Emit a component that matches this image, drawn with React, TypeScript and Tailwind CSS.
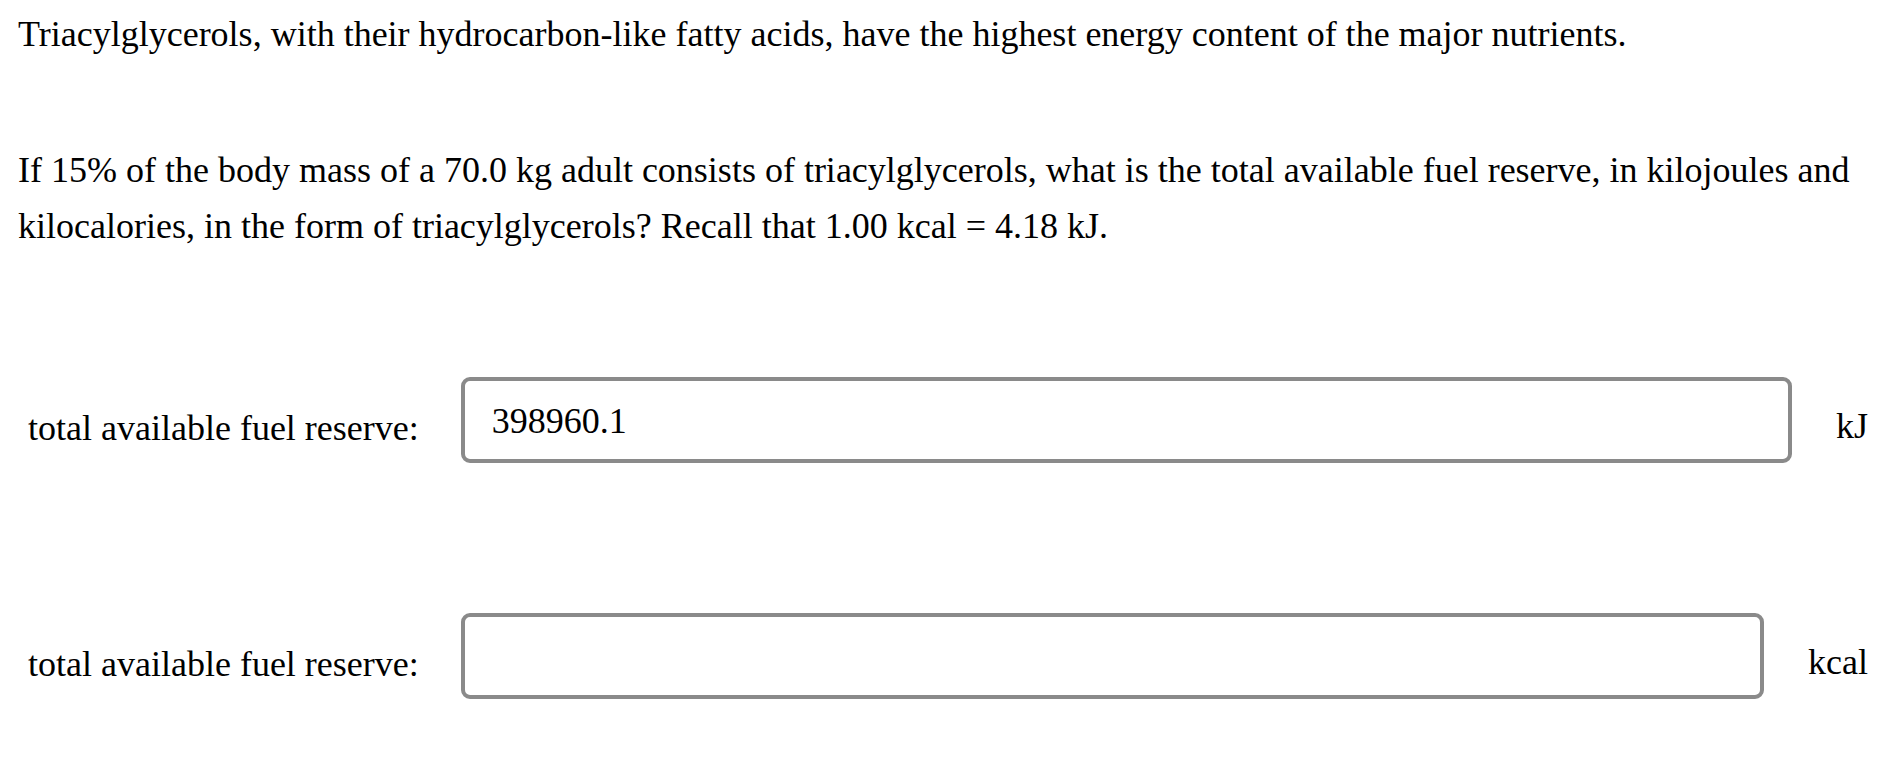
import React from "react";

function AnswerRow({ value, unit }: { value: string; unit: string }) {
  return (
    <div className="flex items-center pl-[10px]">
      <span className="whitespace-nowrap pt-[16px]">total available fuel reserve:</span>
      <input
        type="text"
        defaultValue={value}
        aria-label="total available fuel reserve"
        className="ml-[42px] h-[86px] min-w-0 flex-1 rounded-[9px] border-4 border-[#8a8a8a] bg-white px-[27px] pt-[2px] text-[36px] text-black outline-none"
        style={{ fontFamily: '"Liberation Serif", serif' }}
      />
      <span className="ml-[44px] whitespace-nowrap pt-[12px]">{unit}</span>
    </div>
  );
}

export default function App() {
  return (
    <div
      className="min-h-screen bg-white pl-[18px] pr-[34px] pt-[6px] text-[36px] leading-[56px] text-black"
      style={{ fontFamily: '"Liberation Serif", "Times New Roman", serif' }}
    >
      <p>
        Triacylglycerols, with their hydrocarbon-like fatty acids, have the highest energy content of
        the major nutrients.
      </p>
      <p className="mt-[80px]">
        If 15% of the body mass of a 70.0 kg adult consists of triacylglycerols, what is the total
        available fuel reserve, in kilojoules and kilocalories, in the form of triacylglycerols? Recall
        that 1.00 kcal = 4.18 kJ.
      </p>
      <div className="mt-[123px] flex flex-col gap-[150px]">
        <AnswerRow value="398960.1" unit="kJ" />
        <AnswerRow value="" unit="kcal" />
      </div>
    </div>
  );
}
